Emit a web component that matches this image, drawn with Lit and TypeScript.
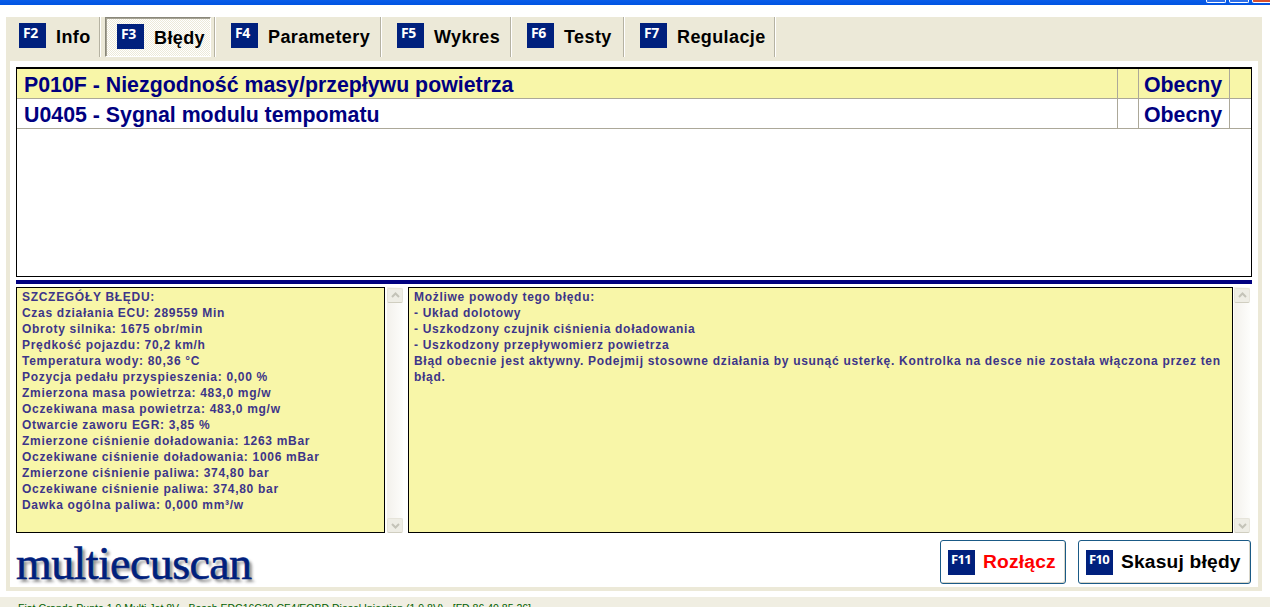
import { LitElement, html, css } from "lit";
import { customElement } from "lit/decorators.js";

const details = [
  "SZCZEGÓŁY BŁĘDU:",
  "Czas działania ECU: 289559 Min",
  "Obroty silnika: 1675 obr/min",
  "Prędkość pojazdu: 70,2 km/h",
  "Temperatura wody: 80,36 °C",
  "Pozycja pedału przyspieszenia: 0,00 %",
  "Zmierzona masa powietrza: 483,0 mg/w",
  "Oczekiwana masa powietrza: 483,0 mg/w",
  "Otwarcie zaworu EGR: 3,85 %",
  "Zmierzone ciśnienie doładowania: 1263 mBar",
  "Oczekiwane ciśnienie doładowania: 1006 mBar",
  "Zmierzone ciśnienie paliwa: 374,80 bar",
  "Oczekiwane ciśnienie paliwa: 374,80 bar",
  "Dawka ogólna paliwa: 0,000 mm³/w",
];
const causes = [
  "Możliwe powody tego błędu:",
  "- Układ dolotowy",
  "- Uszkodzony czujnik ciśnienia doładowania",
  "- Uszkodzony przepływomierz powietrza",
  "Błąd obecnie jest aktywny. Podejmij stosowne działania by usunąć usterkę. Kontrolka na desce nie została włączona przez ten błąd.",
];
const tabs = [
  ["F2", "Info", 90, 9],
  ["F3", "Błędy", 115, 0],
  ["F4", "Parametery", 166, 16],
  ["F5", "Wykres", 130, 16],
  ["F6", "Testy", 113, 16],
  ["F7", "Regulacje", 151, 16],
] as const;

@customElement("app-root")
export class AppRoot extends LitElement {
  static styles = css`
    :host { display: block; width: 1270px; height: 607px; overflow: hidden; background: #fff; font-family: "Liberation Sans", Arial, sans-serif; }
    .title { height: 5px; background: linear-gradient(#0a5ce8, #0054e3); position: relative; }
    .wb { position: absolute; top: 0; height: 2px; width: 18px; border: 1px solid #fff; border-top: 0; background: #2f6fe8; border-radius: 0 0 2px 2px; }
    .wb.close { background: #d8502f; }
    .frame { margin: 12px 8px 6px 6px; height: 574px; box-sizing: border-box; background: #ece9d8; padding: 0 4px 4px; display: flex; flex-direction: column; }
    .tabs { height: 44px; flex: none; display: flex; }
    .tab { box-sizing: border-box; height: 40px; display: flex; align-items: flex-start; gap: 10px; padding-top: 6px; border-right: 1px solid #b5b2a2; box-shadow: 1px 0 0 #fff; font-weight: 700; font-size: 18px; letter-spacing: 0.4px; color: #000; }
    .tab.on { padding: 0; }
    .label { line-height: 20px; margin-top: 4px; white-space: nowrap; }
    .press { box-sizing: border-box; margin-left: 5px; width: 106px; height: 40px; display: flex; align-items: flex-start; gap: 10px; padding: 6px 0 0 11px; border: 1px solid #fff; border-top-color: #8a887a; border-left-color: #8a887a; box-shadow: inset 1px 1px 0 #a5a294; background: repeating-conic-gradient(#fff 0 25%, #ece9d8 0 50%) 0 0 / 2px 2px; }
    .key { width: 27px; height: 25px; flex: none; background: #00207d; color: #fff; font: 700 14px/19px "Open Sans", "Liberation Sans", sans-serif; letter-spacing: -0.5px; padding: 0 0 6px 4px; box-sizing: border-box; }
    .main { flex: 1; min-height: 0; background: #fff; padding: 6px 6px 3px; display: flex; flex-direction: column; }
    .table { flex: none; height: 210px; box-sizing: border-box; border: 1px solid #000; border-top-width: 2px; color: #000080; font-weight: 700; font-size: 21.33px; }
    .row { height: 30px; box-sizing: border-box; border-bottom: 1px solid #aca899; display: grid; grid-template-columns: 1101px 21px 91px 1fr; }
    .row.hl { background: #f8f6a8; }
    .row > div { border-right: 1px solid #aca899; line-height: 33px; height: 29px; padding-left: 5px; white-space: nowrap; overflow: hidden; }
    .row > div:first-child { padding-left: 7px; }
    .row > div:last-child { border-right: 0; }
    .bar { height: 4px; flex: none; margin-top: 3px; background: #000080; }
    .panes { flex: none; display: flex; height: 247px; margin-top: 3px; }
    .box { box-sizing: border-box; border: 1px solid #000; background: #f8f6a8; color: #3d3589; font-size: 12px; font-weight: 700; letter-spacing: 0.7px; line-height: 16px; padding: 1px 5px; height: 246px; }
    .box.a { width: 369px; }
    .box.b { width: 825px; margin-left: 5px; }
    .sb { width: 16px; height: 246px; flex: none; margin-left: 2px; padding-top: 1px; box-sizing: border-box; display: flex; flex-direction: column; justify-content: space-between; background: linear-gradient(90deg, #f3f1ec, #fdfdfb); }
    .sb.b { margin-left: 1px; }
    .sb div { height: 15px; background: #eeede5; border: 1px solid #e6e4da; border-bottom-color: #d0cec0; box-sizing: border-box; display: flex; align-items: center; justify-content: center; border-radius: 2px; }
    .foot { flex: 1; display: flex; align-items: flex-start; justify-content: space-between; }
    .logo { font-family: "Liberation Serif", serif; font-size: 46px; line-height: 46px; color: #00207d; letter-spacing: -0.6px; -webkit-text-stroke: 0.6px #00207d; text-shadow: 3px 3px 3px #8f8f8f; margin-top: 7px; }
    .btns { display: flex; gap: 12px; margin: 6px 1px 0 0; }
    .btn { box-sizing: border-box; height: 44px; display: flex; align-items: center; gap: 8px; padding-left: 7px; border: 1px solid #1a5a86; border-radius: 3px; box-shadow: inset -1px -1px 0 #d8d5c8; background: #fff; font-weight: 700; font-size: 19.2px; letter-spacing: 0.2px; white-space: nowrap; }
    .btn .key { font-size: 13px; letter-spacing: -0.6px; padding-left: 3px; }
    .red { color: #f00; }
    .status { height: 10px; background: #f0eee2; color: #006000; font-size: 10.5px; line-height: 14px; padding: 4px 0 0 18px; box-sizing: border-box; white-space: nowrap; overflow: hidden; }
  `;

  private arrow(up: boolean) {
    return html`<svg width="9" height="7" viewBox="0 0 9 7"><path d=${up ? "M1 5l3.5-3.5L8 5" : "M1 2l3.5 3.5L8 2"} fill="none" stroke="#c4c3b8" stroke-width="2"/></svg>`;
  }

  render() {
    return html`
      <div class="title">
        <span class="wb" style="left:1206px"></span><span class="wb" style="left:1229px"></span><span class="wb close" style="left:1252px"></span>
      </div>
      <div class="frame">
        <div class="tabs">
          ${tabs.map(([k, l, w, p]) => k === "F3"
            ? html`<div class="tab on" style="width:${w}px"><div class="press"><span class="key">${k}</span><span class="label">${l}</span></div></div>`
            : html`<div class="tab" style="width:${w}px;padding-left:${p}px"><span class="key">${k}</span><span class="label">${l}</span></div>`)}
        </div>
        <div class="main">
          <div class="table">
            <div class="row hl"><div>P010F - Niezgodność masy/przepływu powietrza</div><div></div><div>Obecny</div><div></div></div>
            <div class="row"><div>U0405 - Sygnal modulu tempomatu</div><div></div><div>Obecny</div><div></div></div>
          </div>
          <div class="bar"></div>
          <div class="panes">
            <div class="box a">${details.map((d) => html`<div>${d}</div>`)}</div>
            <div class="sb"><div>${this.arrow(true)}</div><div>${this.arrow(false)}</div></div>
            <div class="box b">${causes.map((d) => html`<div>${d}</div>`)}</div>
            <div class="sb b"><div>${this.arrow(true)}</div><div>${this.arrow(false)}</div></div>
          </div>
          <div class="foot">
            <div class="logo">multiecuscan</div>
            <div class="btns">
              <div class="btn" style="width:126px"><span class="key">F11</span><span class="red">Rozłącz</span></div>
              <div class="btn" style="width:173px"><span class="key">F10</span><span>Skasuj błędy</span></div>
            </div>
          </div>
        </div>
      </div>
      <div class="status">Fiat Grande Punto 1.9 Multi Jet 8V - Bosch EDC16C39 CF4/EOBD Diesel Injection (1.9 8V) - [FD 86 40 85 26]</div>
    `;
  }
}
